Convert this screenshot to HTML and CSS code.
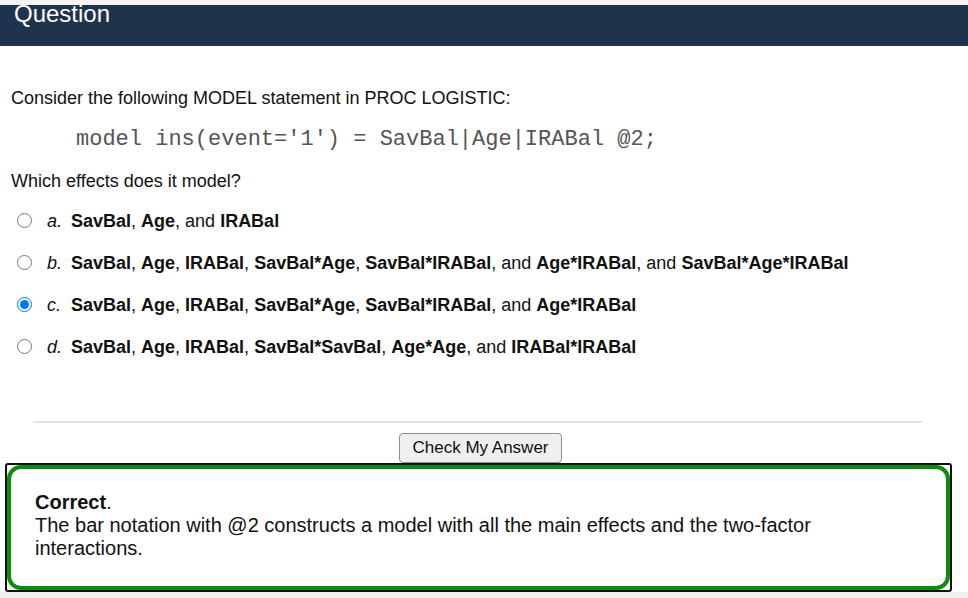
FILE: index.html
```html
<!DOCTYPE html>
<html lang="en">
<head>
<meta charset="utf-8">
<title>Question</title>
<link rel="stylesheet" href="styles.css">
</head>
<body>
<div class="top-strip"></div>
<header class="qhead">
  <h1 class="qhead-title">Question</h1>
</header>
<main class="content">
  <p class="prompt">Consider the following MODEL statement in PROC LOGISTIC:</p>
  <pre class="code">model ins(event='1') = SavBal|Age|IRABal @2;</pre>
  <p class="prompt ask">Which effects does it model?</p>
  <ul class="options">
    <li class="option">
      <label class="option-label">
        <input class="radio" type="radio" name="ans">
        <span class="letter">a.</span>
        <span class="opt-text"><b>SavBal</b>, <b>Age</b>, and <b>IRABal</b></span>
      </label>
    </li>
    <li class="option">
      <label class="option-label">
        <input class="radio" type="radio" name="ans">
        <span class="letter">b.</span>
        <span class="opt-text"><b>SavBal</b>, <b>Age</b>, <b>IRABal</b>, <b>SavBal*Age</b>, <b>SavBal*IRABal</b>, and <b>Age*IRABal</b>, and <b>SavBal*Age*IRABal</b></span>
      </label>
    </li>
    <li class="option">
      <label class="option-label">
        <input class="radio" type="radio" name="ans" checked>
        <span class="letter">c.</span>
        <span class="opt-text"><b>SavBal</b>, <b>Age</b>, <b>IRABal</b>, <b>SavBal*Age</b>, <b>SavBal*IRABal</b>, and <b>Age*IRABal</b></span>
      </label>
    </li>
    <li class="option">
      <label class="option-label">
        <input class="radio" type="radio" name="ans">
        <span class="letter">d.</span>
        <span class="opt-text"><b>SavBal</b>, <b>Age</b>, <b>IRABal</b>, <b>SavBal*SavBal</b>, <b>Age*Age</b>, and <b>IRABal*IRABal</b></span>
      </label>
    </li>
  </ul>
  <hr class="divider">
  <div class="actions">
    <button class="check-btn" type="button">Check My Answer</button>
  </div>
  <div class="feedback">
    <div class="feedback-inner">
      <b>Correct</b>.<br>
      The bar notation with @2 constructs a model with all the main effects and the two-factor interactions.
    </div>
  </div>
</main>
<div class="bottom-strip"></div>
</body>
</html>
```

FILE: styles.css
```css
html, body {
  margin: 0;
  padding: 0;
  background: #ffffff;
  color: #111111;
  font-family: "Liberation Sans", Arial, sans-serif;
  font-size: 18px;
}

.top-strip {
  height: 5px;
  background: #f3f3f3;
}

.qhead {
  display: flow-root;
  height: 41px;
  background: #1f344c;
}

.qhead-title {
  margin: -5px 0 0 0;
  padding-left: 14px;
  font-size: 24px;
  font-weight: normal;
  line-height: 28px;
  color: #ffffff;
}

.content {
  display: flex;
  flex-direction: column;
}

.prompt {
  margin: 41px 0 0 11px;
  line-height: 22px;
}

.code {
  margin: 18px 0 0 76px;
  font-family: "Liberation Mono", "Courier New", monospace;
  font-size: 22px;
  line-height: 26px;
  color: #555555;
}

.ask {
  margin-top: 17px;
}

.options {
  list-style: none;
  margin: 17.5px 0 0 11px;
  padding: 0;
  display: flex;
  flex-direction: column;
  gap: 20px;
}

.option {
  line-height: 22px;
}

.option-label {
  display: flex;
  align-items: center;
}

.radio {
  width: 15px;
  height: 15px;
  margin: 0 0 0 6px;
  flex: none;
}

.letter {
  font-style: italic;
  margin-left: 15px;
  width: 24px;
  flex: none;
}

.divider {
  margin: 63px 46px 0 33px;
  border: none;
  height: 2px;
  background: #e4e4e4;
}

.actions {
  display: flex;
  justify-content: center;
  margin-top: 10px;
  padding-right: 7px;
}

.check-btn {
  font-family: "Liberation Sans", Arial, sans-serif;
  font-size: 17px;
  color: #111111;
  height: 30px;
  padding: 0 12px;
  background: #efefef;
  border: 1px solid #8f8f8f;
  border-radius: 4px;
}

.feedback {
  margin: 0 16px 0 5px;
  border: 2px solid #111111;
  border-radius: 3px;
}

.feedback-inner {
  border: 4px solid #0c8c0c;
  border-radius: 14px;
  padding: 22px 100px 26px 24px;
  font-size: 20px;
  line-height: 23px;
  color: #111111;
}

.bottom-strip {
  height: 8px;
  background: #f0f0f0;
}
```
